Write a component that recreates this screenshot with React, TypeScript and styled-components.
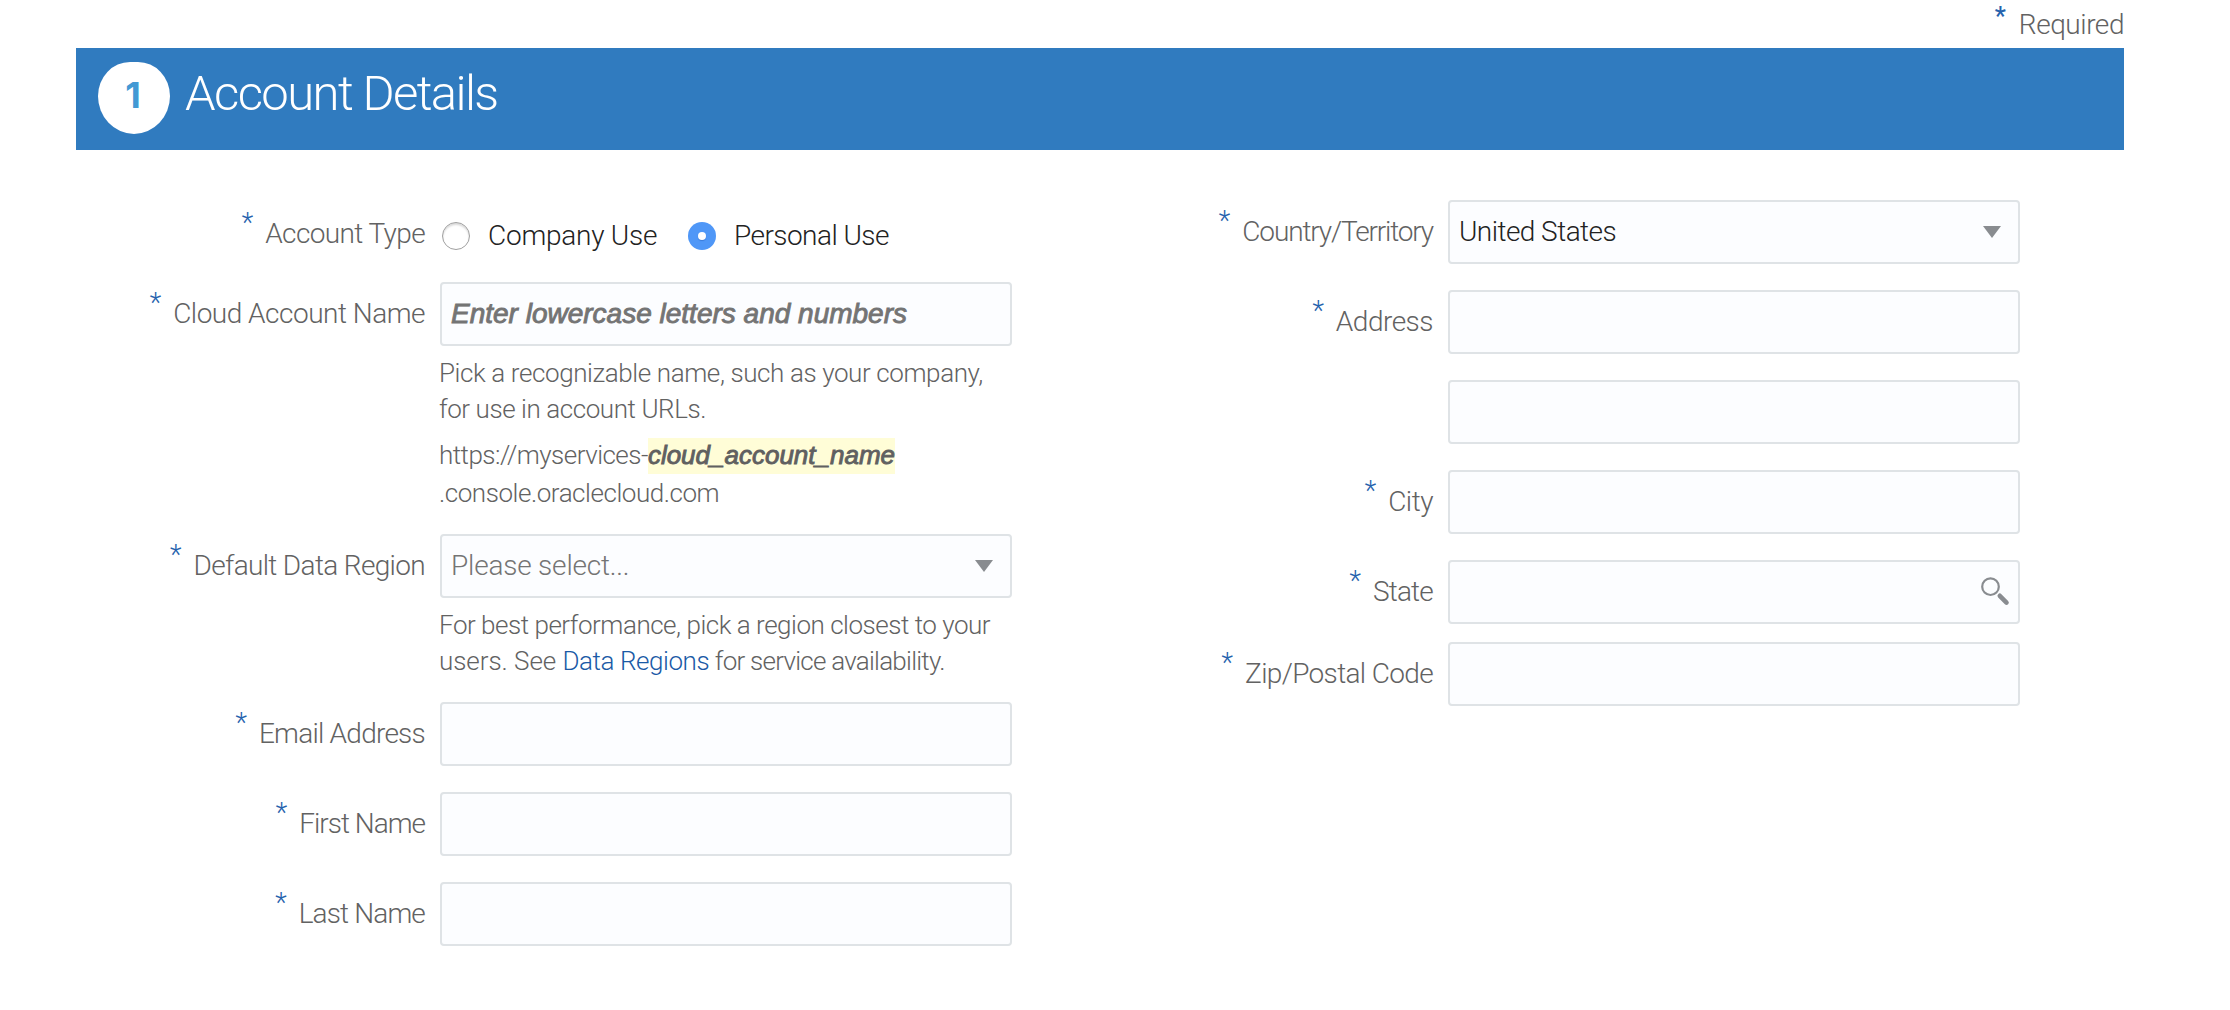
import React from 'react';
import styled, { createGlobalStyle, css } from 'styled-components';

const Global = createGlobalStyle`
  * { box-sizing: border-box; }
  body { margin: 0; background: #fff; }
`;

const Page = styled.main`
  width: 2230px;
  height: 1010px;
  padding: 0 106px 0 76px;
  background: #fff;
  color: #626262;
  font: 300 28px Roboto, "Liberation Sans", sans-serif;
`;

const Text = styled.span<{ $ls?: number }>`
  letter-spacing: ${(p) => p.$ls ?? 0}px;
`;

const Star = styled.span<{ $strong?: boolean }>`
  margin-right: ${(p) => (p.$strong ? 13 : 12)}px;
  font-size: ${(p) => (p.$strong ? 25 : 27)}px;
  font-weight: ${(p) => (p.$strong ? 500 : 300)};
  line-height: 0;
  vertical-align: ${(p) => (p.$strong ? 9 : 11)}px;
  color: #2562ad;
`;

const RequiredNote = styled.div`
  height: 48px;
  padding-top: 1px;
  line-height: 48px;
  text-align: right;
  white-space: nowrap;
`;

const Banner = styled.header`
  display: flex;
  align-items: flex-start;
  height: 102px;
  padding: 14px 22px;
  background: #307bbf;
`;

const Badge = styled.span`
  width: 72px;
  height: 72px;
  padding-right: 2px;
  border-radius: 32px 32px 36px 36px / 34px 34px 38px 38px;
  background: #fff;
  color: #4299d4;
  font: 700 36px/66px Inter, "Liberation Sans", sans-serif;
  text-align: center;
`;

const Title = styled.h1`
  margin: 0 0 0 15px;
  color: #fff;
  font-size: 49px;
  font-weight: 300;
  line-height: 64px;
  letter-spacing: -1.6px;
  white-space: nowrap;
`;

const Columns = styled.div`
  display: flex;
  justify-content: space-between;
  padding: 50px 104px 0 0;
`;

const Column = styled.section`
  display: flex;
  flex-direction: column;
  width: 936px;
`;

const Row = styled.div<{ $gap?: number }>`
  display: flex;
  align-items: flex-start;
  margin-top: ${(p) => p.$gap ?? 26}px;
`;

const Label = styled.label`
  width: 364px;
  padding-right: 15px;
  line-height: 64px;
  text-align: right;
  white-space: nowrap;
`;

const Field = styled.div`
  width: 572px;
`;

const Box = styled.div<{ $tone?: string }>`
  display: flex;
  align-items: center;
  justify-content: space-between;
  height: 64px;
  padding: 0 17px 0 9px;
  border: 2px solid #dfe3e6;
  border-radius: 4px;
  background: #fcfdff;
  color: ${(p) => p.$tone ?? '#222'};
  line-height: 60px;
  white-space: nowrap;
`;

const strong = css`
  font-family: "Liberation Sans", sans-serif;
  font-weight: 400;
  font-style: italic;
  -webkit-text-stroke: 0.9px currentColor;
`;

const Hint = styled.span`
  ${strong}
  color: #747474;
`;

const Caret = styled.i`
  width: 0;
  height: 0;
  border: solid transparent;
  border-width: 12px 9px 0;
  border-top-color: #898c90;
`;

const SearchIcon = styled.svg`
  width: 30px;
  height: 30px;
  margin-right: -9px;
`;

const Help = styled.p<{ $line?: number }>`
  margin: 9px 0 0 -1px;
  font-size: 26px;
  line-height: ${(p) => p.$line ?? 36}px;
  white-space: nowrap;
`;

const Mark = styled.em`
  ${strong}
  display: inline-block;
  height: 36px;
  line-height: 35px;
  vertical-align: top;
  margin-top: 2px;
  background: #fffdd7;
  color: #606060;
`;

const Link = styled.a`
  color: #1a5aa6;
  letter-spacing: -0.43px;
`;

const Options = styled.div`
  display: flex;
  align-items: center;
  height: 64px;
  padding: 4px 0 0 2px;
  color: #222;
  line-height: 60px;
  white-space: nowrap;
`;

const Option = styled.label<{ $width?: number }>`
  display: flex;
  align-items: center;
  gap: 18px;
  width: ${(p) => (p.$width ? `${p.$width}px` : 'auto')};
`;

const Radio = styled.span<{ $on?: boolean }>`
  display: grid;
  place-items: center;
  flex: none;
  width: 28px;
  height: 28px;
  border-radius: 50%;
  ${(p) =>
    p.$on
      ? css`
          background: #4f97f7;
          &::after {
            content: '';
            width: 8px;
            height: 8px;
            border-radius: 50%;
            background: #fff;
            box-shadow: 0 1px 1px rgba(20, 70, 160, 0.35);
          }
        `
      : css`
          border: 1px solid #a0a0a0;
          box-shadow: inset 0 2px 2px rgba(0, 0, 0, 0.15);
        `}
`;

type FieldRowProps = {
  label?: string;
  ls?: number;
  gap?: number;
  children?: React.ReactNode;
};

const FieldRow = ({ label, ls, gap, children }: FieldRowProps) => (
  <Row $gap={gap}>
    <Label>
      {label && (
        <>
          <Star>*</Star>
          <Text $ls={ls}>{label}</Text>
        </>
      )}
    </Label>
    <Field>{children ?? <Box />}</Field>
  </Row>
);

export default function App() {
  return (
    <Page>
      <Global />
      <RequiredNote>
        <Star $strong>*</Star>
        <Text $ls={-0.45}>Required</Text>
      </RequiredNote>
      <Banner>
        <Badge>1</Badge>
        <Title>Account Details</Title>
      </Banner>
      <Columns>
        <Column>
          <FieldRow label="Account Type" ls={-0.62} gap={2}>
            <Options>
              <Option $width={246}>
                <Radio />
                <Text $ls={-0.25}>Company Use</Text>
              </Option>
              <Option>
                <Radio $on />
                <Text $ls={-0.55}>Personal Use</Text>
              </Option>
            </Options>
          </FieldRow>
          <FieldRow label="Cloud Account Name" ls={-0.5} gap={16}>
            <Box>
              <Hint>Enter lowercase letters and numbers</Hint>
            </Box>
            <Help>
              <Text $ls={-0.4}>Pick a recognizable name, such as your company,</Text>
              <br />
              <Text $ls={-0.43}>for use in account URLs.</Text>
            </Help>
            <Help $line={38}>
              <Text $ls={-0.52}>https://myservices-</Text>
              <Mark>cloud_account_name</Mark>
              <br />
              <Text $ls={-0.45}>.console.oraclecloud.com</Text>
            </Help>
          </FieldRow>
          <FieldRow label="Default Data Region" ls={-0.66} gap={22}>
            <Box $tone="#747474">
              <Text $ls={-0.2}>Please select...</Text>
              <Caret />
            </Box>
            <Help>
              <Text $ls={-0.48}>For best performance, pick a region closest to your</Text>
              <br />
              <Text $ls={-0.05}>users. See </Text>
              <Link>Data Regions</Link>
              <Text $ls={-0.75}> for service availability.</Text>
            </Help>
          </FieldRow>
          <FieldRow label="Email Address" ls={-0.75} gap={23} />
          <FieldRow label="First Name" ls={-1} />
          <FieldRow label="Last Name" ls={-0.85} />
        </Column>
        <Column>
          <FieldRow label="Country/Territory" ls={-1.15} gap={0}>
            <Box>
              <Text $ls={-0.55}>United States</Text>
              <Caret />
            </Box>
          </FieldRow>
          <FieldRow label="Address" ls={-0.5} />
          <FieldRow />
          <FieldRow label="City" ls={-0.5} />
          <FieldRow label="State" ls={-0.8}>
            <Box>
              <span />
              <SearchIcon viewBox="0 0 30 30" fill="none" stroke="#898c90">
                <circle cx="10.5" cy="9.7" r="8.3" strokeWidth="2.2" />
                <path d="M19.8 18.8 L26.5 25.6" strokeWidth="4.6" strokeLinecap="round" />
              </SearchIcon>
            </Box>
          </FieldRow>
          <FieldRow label="Zip/Postal Code" ls={-0.65} gap={18} />
        </Column>
      </Columns>
    </Page>
  );
}
